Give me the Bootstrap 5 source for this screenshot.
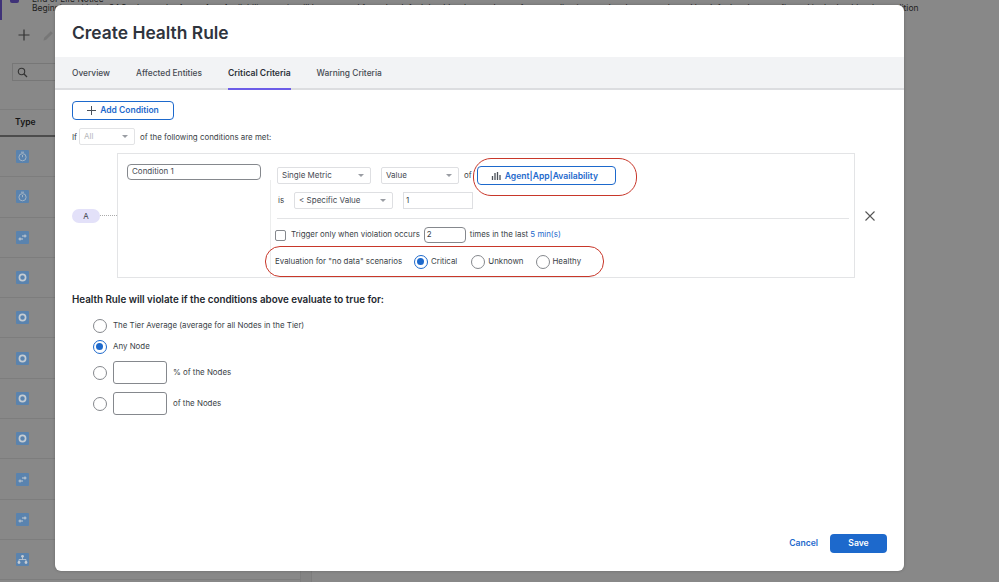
<!doctype html>
<html lang="en"><head><meta charset="utf-8"><title>Create Health Rule</title>
<link href="https://cdn.jsdelivr.net/npm/bootstrap@5.3.0/dist/css/bootstrap.min.css" rel="stylesheet">
<style>
html,body{height:582px;overflow:hidden}
body{background:#888;font-family:Inter,"Liberation Sans",sans-serif;color:#3a3f47;font-size:7.9px;line-height:1.2}
.under{height:582px;width:999px;overflow:hidden;color:#1f1f1f}
.notice{height:20px;border-left:2px solid #3f3278;white-space:nowrap;font-size:8.5px;line-height:9px;overflow:hidden}
.notice-ico{width:9px;height:3px;margin-left:8px;background:#3f3278;border-radius:0 0 2px 2px;flex:none}
.notice-text{margin-left:13px}
.notice-row{margin-top:-5px}
.left-col{width:300px;flex:none}
.splitter{width:12px;height:562px;background:#848484;border-left:1px solid #7d7d7d;border-right:1px solid #7d7d7d;flex:none}
.tool-row{height:43px;padding:0 0 13px 18px;gap:13px}
.search-row{height:47px;padding-left:12px;border-bottom:1px solid #7d7d7d}
.search-box{width:60px;height:18px;border:1px solid #777;padding-left:4px}
.head-cell{height:27px;padding-left:15px;font-weight:600;font-size:8.6px;border-bottom:2px solid #4c4c4c;color:#151515}
.type-row{height:40.3px;padding-left:16px;border-bottom:1px solid #7d7d7d}
.type-row svg{display:block}
.dialog{position:absolute;left:55px;top:5px;width:849px;height:566px;background:#fff;border-radius:6px;box-shadow:0 0 3px rgba(0,0,0,.25)}
.dlg-title{height:52px;padding:18px 17px 0;font-size:17.4px;line-height:20px;font-weight:600;color:#2f343d;margin:0}
.dlg-tabs{height:33px;background:#f2f3f5;border-bottom:2px solid #dcdde0;padding:0 17px;gap:26px}
.dlg-tab{display:block;height:33px;line-height:33px;color:#454a52;font-size:8.4px;font-weight:500;white-space:nowrap;text-decoration:none}
.dlg-tab.active-tab{color:#2b3038;font-size:8.6px;font-weight:600;border-bottom:2px solid #6c5ce7}
.dlg-main{padding:11px 17px 0}
.add-btn{width:102px;height:19px;padding:0;border:1.5px solid #1d69cc;border-radius:4px;color:#1d69cc;font-weight:600;font-size:8.5px;line-height:15px;background:#fff}
.if-row{margin-top:8px;height:17px;gap:5px}
.if-row .pick{width:56px;color:#b5b7bb;border-color:#e2e3e5;margin-left:-3px}
.if-text{padding-top:2px}
.pick{height:17px;border:1px solid #dedfe2;border-radius:2px;padding:0 4px;color:#454a52;font-size:8px;line-height:15px;background:#fff;position:relative;white-space:nowrap}
.pick::after{content:"";position:absolute;right:6px;top:6px;border:3.5px solid transparent;border-top:3.5px solid #9a9da3;border-bottom:0}
.cond-zone{margin-top:8px}
.tag-side{width:45px}
.tag-pill{width:28px;height:14px;background:#e3e1f9;border-radius:7px;text-align:center;line-height:14px;font-size:7.9px}
.tag-dots{flex:1;border-top:1px dotted #aaa}
.cond-box{width:738px;height:125px;border:1px solid #e3e4e6;padding:10px 0 0 9px;position:relative}
.name-input{width:134px;height:16px;border:1.2px solid #85888d;border-radius:4px;padding:0 4px;font-size:8px;line-height:13px;color:#454a52}
.cond-right{width:578px;margin-left:9px;border-left:1px solid #eceded;margin-top:16px;padding-left:6px;height:98px}
.line-a{margin-top:-14px;height:19px;gap:10px}
.w-94{width:94px}.w-78{width:78px}.w-99{width:99px}
.of-word{margin-left:-5px}
.metric-wrap{position:relative;margin-left:-5px}
.metric-wrap::after{content:"";position:absolute;left:-4px;top:-8px;width:164px;height:38px;border:1.5px solid #c8372a;border-radius:18px;pointer-events:none}
.metric-btn{width:139px;height:19px;border:1.3px solid #1d69cc;border-radius:4px;color:#1d69cc;font-weight:600;font-size:8.6px;line-height:16px;padding-left:13px;white-space:nowrap;display:flex;align-items:center;gap:4px}
.line-b{margin-top:7px;height:17px;gap:10px}
.is-word{margin-left:1px}
.plain-box{width:70px;height:17px;border:1px solid #dedfe2;padding:0 2px;line-height:15px}
.cond-rule{width:572px;height:1px;background:#e3e4e6;margin-top:9px}
.line-c{height:16px;margin-top:8px;gap:5px;white-space:nowrap}
.tick{width:11px;height:11px;border:1.2px solid #85888d;border-radius:2px;margin-left:-2px}
.small-input{width:42px;height:16px;border:1.2px solid #85888d;border-radius:4px;padding:0 2px;line-height:13px;margin:0 -1px}
.link-blue{color:#1d69cc}
.nodata-row{width:339px;height:31px;margin:3px 0 0 -12px;border:1.5px solid #c8372a;border-radius:15px;padding-left:9px;white-space:nowrap}
.dot{width:14px;height:14px;border:1.2px solid #85888d;border-radius:50%;background:#fff;flex:none;display:block}
.dot.on{border:1.5px solid #1d69cc;position:relative}
.dot.on::after{content:"";position:absolute;left:2px;top:2px;width:7px;height:7px;border-radius:50%;background:#1d69cc}
.gap-14{margin-left:14px}.gap-12{margin-left:12px}.gap-3px{margin-left:3px}
.close-x{margin-left:10px}
.viol-title{font-size:9.8px;font-weight:600;color:#23272e;margin:15px 0 0;line-height:13px}
.viol-list{padding:9px 0 0 21px}
.viol-line{gap:6px;height:21px}
.viol-line.pad-b{margin-bottom:4px}
.viol-line.tall{height:23px;margin-bottom:8px}
.box-input{width:54px;height:23px;border:1.2px solid #85888d;border-radius:3px}
.dlg-foot{position:absolute;right:17px;bottom:18px;gap:12px}
.plain-link{color:#1d69cc;font-weight:600;font-size:8.6px}
.save-btn{width:57px;height:19px;background:#1d69cc;color:#fff;border:0;border-radius:4px;padding:0;font-weight:600;font-size:8.6px;line-height:19px}
</style></head>
<body>
<svg width="0" height="0" class="position-absolute">
<symbol id="i-watch" viewBox="0 0 13 13"><rect width="13" height="13" rx="1" fill="#5a83ae"/><circle cx="6.5" cy="7.2" r="3.6" fill="none" stroke="#a5b4c4" stroke-width="1"/><path d="M5 2.2h3M6.5 7.2V5" stroke="#a5b4c4" stroke-width="1"/></symbol>
<symbol id="i-swap" viewBox="0 0 13 13"><rect width="13" height="13" rx="1" fill="#5a83ae"/><path d="M6 5h4.500M9 3.500v3M2.500 8H7M4 6.500v3" stroke="#c6ccd2" stroke-width="1" fill="none"/></symbol>
<symbol id="i-ring" viewBox="0 0 13 13"><rect width="13" height="13" rx="1" fill="#5a83ae"/><circle cx="6.500" cy="6.500" r="3.100" fill="none" stroke="#c6ccd2" stroke-width="1.700"/></symbol>
<symbol id="i-tree" viewBox="0 0 13 13"><rect width="13" height="13" rx="1" fill="#5a83ae"/><path d="M6.500 4v2.500M3 9V6.500h7V9" stroke="#c6ccd2" stroke-width=".8" fill="none"/><circle cx="6.500" cy="3.300" r="1.400" fill="#c6ccd2"/><circle cx="3" cy="9.500" r="1.400" fill="#c6ccd2"/><circle cx="10" cy="9.500" r="1.400" fill="#c6ccd2"/></symbol>
</svg>
<div class="under">
  <div class="notice d-flex"><div class="notice-ico"></div><div class="notice-text"><div class="notice-row">End of Life Notice</div><div>Beginning with the 24.3 release, the Agent App Availability metric will be removed from the default health rule templates of new applications and no longer evaluated by default unless configured in the health rule condition</div></div></div>
  <div class="d-flex">
  <div class="left-col">
  <div class="tool-row d-flex align-items-center">
    <svg width="12" height="12" viewBox="0 0 12 12"><path d="M6 .500v11M.500 6h11" stroke="#333" stroke-width="1.200"/></svg>
    <svg width="11" height="11" viewBox="0 0 11 11"><path d="M.5 10.500l.7-2.700L7.800 1.200l2 2L3.200 9.800z" fill="#777"/></svg>
  </div>
  <div class="search-row"><div class="search-box d-flex align-items-center"><svg width="11" height="11" viewBox="0 0 11 11"><circle cx="4.500" cy="4.500" r="3.200" fill="none" stroke="#333" stroke-width="1.100"/><path d="M7 7l3 3" stroke="#333" stroke-width="1.200"/></svg></div></div>
  <div class="head-cell d-flex align-items-center">Type</div>
  <div class="type-row d-flex align-items-center"><svg width="13" height="13"><use href="#i-watch"/></svg></div>
  <div class="type-row d-flex align-items-center"><svg width="13" height="13"><use href="#i-watch"/></svg></div>
  <div class="type-row d-flex align-items-center"><svg width="13" height="13"><use href="#i-swap"/></svg></div>
  <div class="type-row d-flex align-items-center"><svg width="13" height="13"><use href="#i-ring"/></svg></div>
  <div class="type-row d-flex align-items-center"><svg width="13" height="13"><use href="#i-ring"/></svg></div>
  <div class="type-row d-flex align-items-center"><svg width="13" height="13"><use href="#i-ring"/></svg></div>
  <div class="type-row d-flex align-items-center"><svg width="13" height="13"><use href="#i-ring"/></svg></div>
  <div class="type-row d-flex align-items-center"><svg width="13" height="13"><use href="#i-ring"/></svg></div>
  <div class="type-row d-flex align-items-center"><svg width="13" height="13"><use href="#i-swap"/></svg></div>
  <div class="type-row d-flex align-items-center"><svg width="13" height="13"><use href="#i-swap"/></svg></div>
  <div class="type-row d-flex align-items-center"><svg width="13" height="13"><use href="#i-tree"/></svg></div>
  </div>
  <div class="splitter"></div>
  </div>
</div>
<div class="dialog">
  <h1 class="dlg-title">Create Health Rule</h1>
  <nav class="dlg-tabs d-flex">
    <a class="dlg-tab" href="#">Overview</a><a class="dlg-tab" href="#">Affected Entities</a><a class="dlg-tab active-tab" href="#">Critical Criteria</a><a class="dlg-tab" href="#">Warning Criteria</a>
  </nav>
  <div class="dlg-main">
    <button class="btn add-btn d-flex align-items-center justify-content-center gap-1"><svg width="9" height="9" viewBox="0 0 9 9"><path d="M4.500 0v9M0 4.500h9" stroke="#4a5058" stroke-width="1"/></svg>Add Condition</button>
    <div class="if-row d-flex align-items-center"><span class="if-text">If</span><div class="pick">All</div><span class="if-text">of the following conditions are met:</span></div>
    <div class="cond-zone d-flex align-items-center">
      <div class="tag-side d-flex align-items-center"><div class="tag-pill">A</div><div class="tag-dots"></div></div>
      <div class="cond-box d-flex">
        <div class="name-input">Condition 1</div>
        <div class="cond-right">
          <div class="line-a d-flex align-items-center">
            <div class="pick w-94">Single Metric</div><div class="pick w-78">Value</div><span class="of-word">of</span>
            <div class="metric-wrap"><div class="metric-btn"><svg width="10" height="10" viewBox="0 0 10 10"><path d="M1.500 5v4M4 2v7M6.500 1v8M9 4v5" stroke="#4a5058" stroke-width="1.300"/></svg>Agent|App|Availability</div></div>
          </div>
          <div class="line-b d-flex align-items-center"><span class="is-word">is</span><div class="pick w-99">&lt; Specific Value</div><div class="plain-box">1</div></div>
          <div class="cond-rule"></div>
          <div class="line-c d-flex align-items-center"><div class="tick"></div><span>Trigger only when violation occurs</span><div class="small-input">2</div><span>times in the last <span class="link-blue">5 min(s)</span></span></div>
          <div class="nodata-row d-flex align-items-center"><span>Evaluation for "no data" scenarios</span>
            <span class="dot on gap-12"></span><span class="gap-3px">Critical</span>
            <span class="dot gap-14"></span><span class="gap-3px">Unknown</span>
            <span class="dot gap-12"></span><span class="gap-3px">Healthy</span>
          </div>
        </div>
      </div>
      <svg class="close-x" width="10" height="10" viewBox="0 0 10 10"><path d="M.5.500l9 9M9.500.500l-9 9" stroke="#555" stroke-width="1.100"/></svg>
    </div>
    <h2 class="viol-title">Health Rule will violate if the conditions above evaluate to true for:</h2>
    <div class="viol-list">
      <div class="viol-line d-flex align-items-center"><span class="dot"></span><span>The Tier Average (average for all Nodes in the Tier)</span></div>
      <div class="viol-line pad-b d-flex align-items-center"><span class="dot on"></span><span>Any Node</span></div>
      <div class="viol-line tall d-flex align-items-center"><span class="dot"></span><div class="box-input"></div><span>% of the Nodes</span></div>
      <div class="viol-line tall d-flex align-items-center"><span class="dot"></span><div class="box-input"></div><span>of the Nodes</span></div>
    </div>
  </div>
  <div class="dlg-foot d-flex align-items-center"><span class="plain-link">Cancel</span><button class="btn save-btn">Save</button></div>
</div>
<script src="https://cdn.jsdelivr.net/npm/bootstrap@5.3.0/dist/js/bootstrap.bundle.min.js"></script>
</body></html>
